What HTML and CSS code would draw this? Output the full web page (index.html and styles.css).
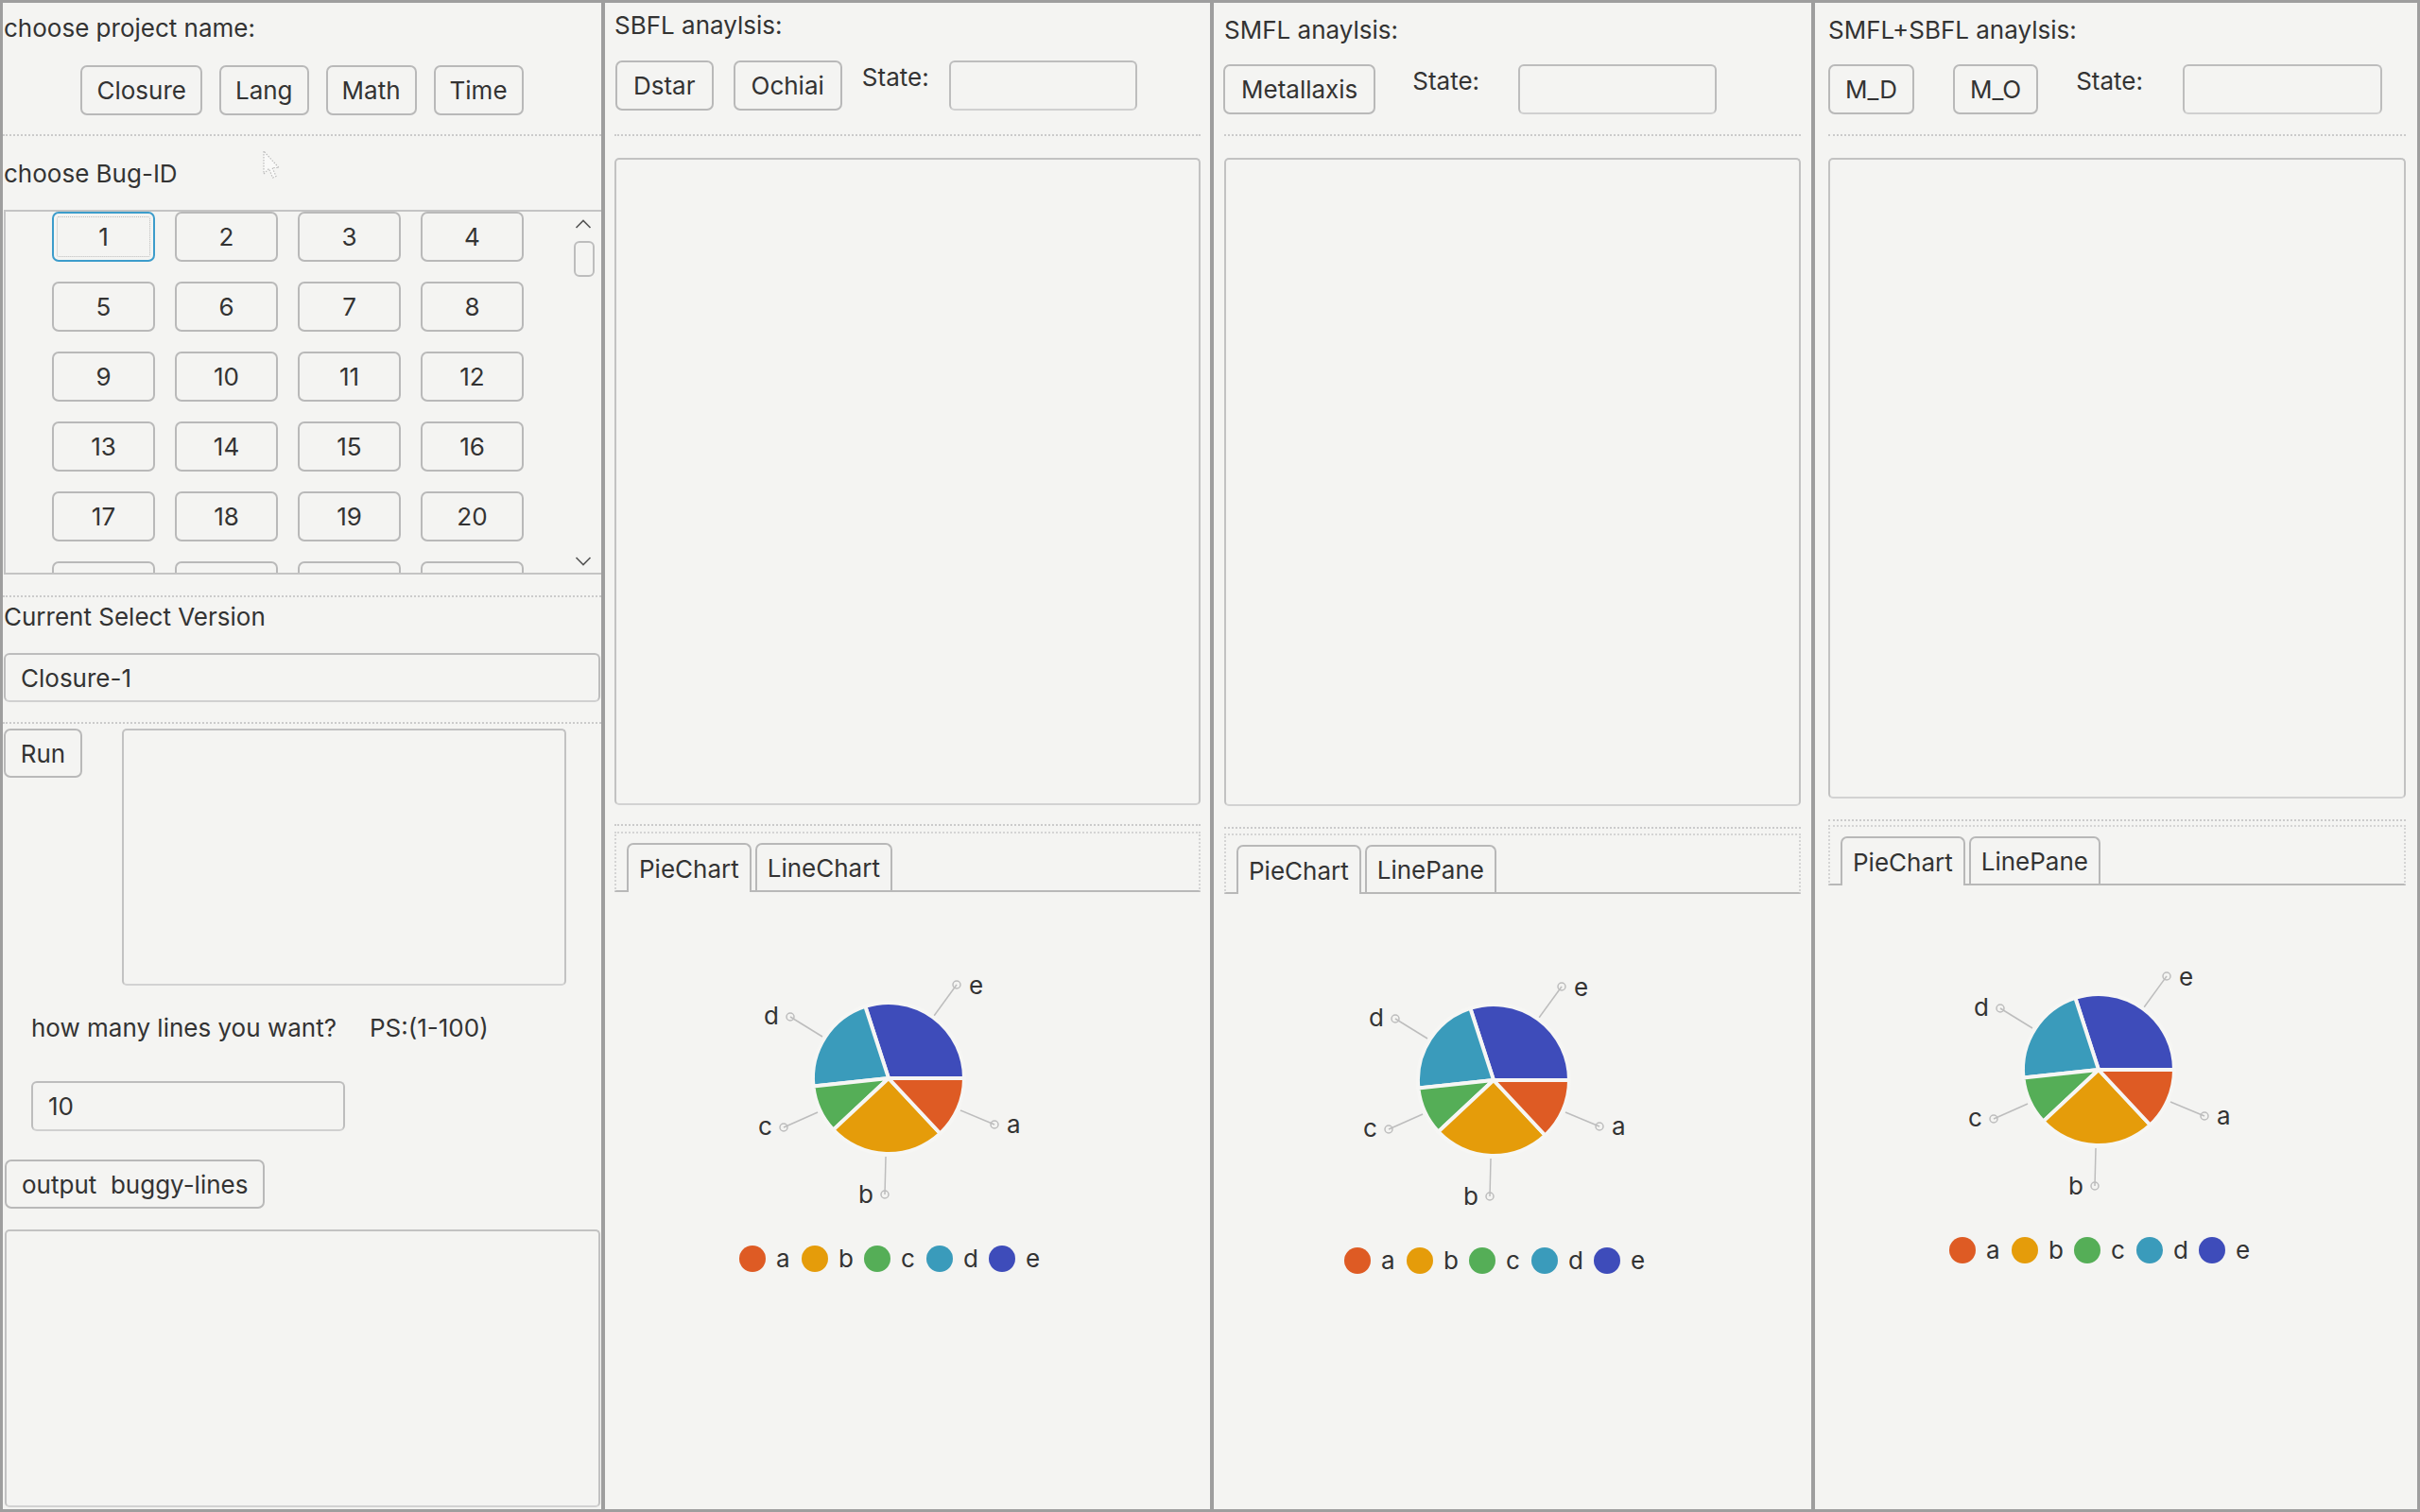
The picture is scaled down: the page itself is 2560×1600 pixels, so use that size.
FILE: index.html
```html
<!DOCTYPE html>
<html lang="en">
<head>
<meta charset="utf-8">
<title>Fault Localization</title>
<link rel="stylesheet" href="styles.css">
</head>
<body>
<div class="window">

  <section class="col col-project">
    <div class="label title-project">choose project name:</div>
    <div class="proj-row">
      <div class="btn">Closure</div>
      <div class="btn">Lang</div>
      <div class="btn">Math</div>
      <div class="btn">Time</div>
    </div>
    <div class="sep sep-a"></div>
    <div class="label bug-label">choose Bug-ID</div>
    <svg class="cursor" width="20" height="34" viewBox="0 0 20 34"><path d="M1,1 L1,25 L6.5,19.5 L10.5,29 L14,27.5 L10,18.5 L17,18.5 Z" fill="#fbfbfa" stroke="#a9a9a9" stroke-width="1.2" stroke-dasharray="1.5 1.5"/></svg>
    <div class="scroll-pane">
      <div class="bug-grid">
        <div class="btn bug focused">1</div>
        <div class="btn bug">2</div>
        <div class="btn bug">3</div>
        <div class="btn bug">4</div>
        <div class="btn bug">5</div>
        <div class="btn bug">6</div>
        <div class="btn bug">7</div>
        <div class="btn bug">8</div>
        <div class="btn bug">9</div>
        <div class="btn bug">10</div>
        <div class="btn bug">11</div>
        <div class="btn bug">12</div>
        <div class="btn bug">13</div>
        <div class="btn bug">14</div>
        <div class="btn bug">15</div>
        <div class="btn bug">16</div>
        <div class="btn bug">17</div>
        <div class="btn bug">18</div>
        <div class="btn bug">19</div>
        <div class="btn bug">20</div>
        <div class="btn bug" aria-hidden="true"></div>
        <div class="btn bug" aria-hidden="true"></div>
        <div class="btn bug" aria-hidden="true"></div>
        <div class="btn bug" aria-hidden="true"></div>
      </div>
      <div class="vscroll">
        <svg class="arrow arrow-up" width="18" height="10" viewBox="0 0 18 10"><polyline points="1.5,9 9,1.5 16.5,9" fill="none" stroke="#555" stroke-width="1.6"/></svg>
        <div class="thumb"></div>
        <svg class="arrow arrow-down" width="18" height="10" viewBox="0 0 18 10"><polyline points="1.5,1 9,8.5 16.5,1" fill="none" stroke="#555" stroke-width="1.6"/></svg>
      </div>
    </div>
    <div class="sep sep-b"></div>
    <div class="label ver-label">Current Select Version</div>
    <div class="field version-field">Closure-1</div>
    <div class="sep sep-c"></div>
    <div class="run-row">
      <div class="btn run-btn">Run</div>
      <div class="area run-area"></div>
    </div>
    <div class="label lines-row"><span class="lines-q">how many lines you want?</span><span>PS:(1-100)</span></div>
    <div class="field lines-field">10</div>
    <div class="btn out-btn">output&nbsp; buggy-lines</div>
    <div class="area out-area"></div>
  </section>

  <section class="col col-sbfl">
    <div class="label a-title">SBFL anaylsis:</div>
    <div class="tool-row">
      <div class="btn tool-first">Dstar</div>
      <div class="btn">Ochiai</div>
      <div class="label state">State:</div>
      <div class="field state-field"></div>
    </div>
    <div class="sep sep-d"></div>
    <div class="area main-area"></div>
    <div class="sep sep-e"></div>
    <div class="tab-box">
      <div class="tab active">PieChart</div>
      <div class="tab">LineChart</div>
    </div>
    <svg class="pie" width="440" height="392" viewBox="0 0 440 392">
      <g class="leaders">
        <line x1="272" y1="78" x2="248" y2="111"/><circle cx="272" cy="78" r="4"/>
        <line x1="96" y1="112" x2="130" y2="133"/><circle cx="96" cy="112" r="4"/>
        <line x1="89" y1="229" x2="125" y2="213"/><circle cx="89" cy="229" r="4"/>
        <line x1="196" y1="300" x2="197" y2="260"/><circle cx="196" cy="300" r="4"/>
        <line x1="312" y1="226" x2="276" y2="211"/><circle cx="312" cy="226" r="4"/>
      </g>
      <g class="slices">
        <path class="s-e" d="M200,177 L280,177 A80,80 0 0 0 175.3,100.9 Z"/>
        <path class="s-d" d="M200,177 L175.3,100.9 A80,80 0 0 0 120.4,185.4 Z"/>
        <path class="s-c" d="M200,177 L120.4,185.4 A80,80 0 0 0 141.5,231.6 Z"/>
        <path class="s-b" d="M200,177 L141.5,231.6 A80,80 0 0 0 254.6,235.5 Z"/>
        <path class="s-a" d="M200,177 L254.6,235.5 A80,80 0 0 0 280,177 Z"/>
      </g>
      <g class="plabels">
        <text x="285" y="88">e</text>
        <text x="68" y="120">d</text>
        <text x="62" y="237">c</text>
        <text x="168" y="309">b</text>
        <text x="325" y="235">a</text>
      </g>
      <g class="legend">
        <circle class="s-a" cx="56" cy="368" r="14"/><text x="81" y="377">a</text>
        <circle class="s-b" cx="122" cy="368" r="14"/><text x="147" y="377">b</text>
        <circle class="s-c" cx="188" cy="368" r="14"/><text x="213" y="377">c</text>
        <circle class="s-d" cx="254" cy="368" r="14"/><text x="279" y="377">d</text>
        <circle class="s-e" cx="320" cy="368" r="14"/><text x="345" y="377">e</text>
      </g>
    </svg>
  </section>

  <section class="col col-smfl">
    <div class="label a-title">SMFL anaylsis:</div>
    <div class="tool-row">
      <div class="btn tool-first">Metallaxis</div>
      <div class="label state">State:</div>
      <div class="field state-field"></div>
    </div>
    <div class="sep sep-d"></div>
    <div class="area main-area"></div>
    <div class="sep sep-e"></div>
    <div class="tab-box">
      <div class="tab active">PieChart</div>
      <div class="tab">LinePane</div>
    </div>
    <svg class="pie" width="440" height="392" viewBox="0 0 440 392">
      <g class="leaders">
        <line x1="272" y1="78" x2="248" y2="111"/><circle cx="272" cy="78" r="4"/>
        <line x1="96" y1="112" x2="130" y2="133"/><circle cx="96" cy="112" r="4"/>
        <line x1="89" y1="229" x2="125" y2="213"/><circle cx="89" cy="229" r="4"/>
        <line x1="196" y1="300" x2="197" y2="260"/><circle cx="196" cy="300" r="4"/>
        <line x1="312" y1="226" x2="276" y2="211"/><circle cx="312" cy="226" r="4"/>
      </g>
      <g class="slices">
        <path class="s-e" d="M200,177 L280,177 A80,80 0 0 0 175.3,100.9 Z"/>
        <path class="s-d" d="M200,177 L175.3,100.9 A80,80 0 0 0 120.4,185.4 Z"/>
        <path class="s-c" d="M200,177 L120.4,185.4 A80,80 0 0 0 141.5,231.6 Z"/>
        <path class="s-b" d="M200,177 L141.5,231.6 A80,80 0 0 0 254.6,235.5 Z"/>
        <path class="s-a" d="M200,177 L254.6,235.5 A80,80 0 0 0 280,177 Z"/>
      </g>
      <g class="plabels">
        <text x="285" y="88">e</text>
        <text x="68" y="120">d</text>
        <text x="62" y="237">c</text>
        <text x="168" y="309">b</text>
        <text x="325" y="235">a</text>
      </g>
      <g class="legend">
        <circle class="s-a" cx="56" cy="368" r="14"/><text x="81" y="377">a</text>
        <circle class="s-b" cx="122" cy="368" r="14"/><text x="147" y="377">b</text>
        <circle class="s-c" cx="188" cy="368" r="14"/><text x="213" y="377">c</text>
        <circle class="s-d" cx="254" cy="368" r="14"/><text x="279" y="377">d</text>
        <circle class="s-e" cx="320" cy="368" r="14"/><text x="345" y="377">e</text>
      </g>
    </svg>
  </section>

  <section class="col col-mix">
    <div class="label a-title">SMFL+SBFL anaylsis:</div>
    <div class="tool-row">
      <div class="btn tool-first">M_D</div>
      <div class="btn">M_O</div>
      <div class="label state">State:</div>
      <div class="field state-field"></div>
    </div>
    <div class="sep sep-d"></div>
    <div class="area main-area"></div>
    <div class="sep sep-e"></div>
    <div class="tab-box">
      <div class="tab active">PieChart</div>
      <div class="tab">LinePane</div>
    </div>
    <svg class="pie" width="440" height="392" viewBox="0 0 440 392">
      <g class="leaders">
        <line x1="272" y1="78" x2="248" y2="111"/><circle cx="272" cy="78" r="4"/>
        <line x1="96" y1="112" x2="130" y2="133"/><circle cx="96" cy="112" r="4"/>
        <line x1="89" y1="229" x2="125" y2="213"/><circle cx="89" cy="229" r="4"/>
        <line x1="196" y1="300" x2="197" y2="260"/><circle cx="196" cy="300" r="4"/>
        <line x1="312" y1="226" x2="276" y2="211"/><circle cx="312" cy="226" r="4"/>
      </g>
      <g class="slices">
        <path class="s-e" d="M200,177 L280,177 A80,80 0 0 0 175.3,100.9 Z"/>
        <path class="s-d" d="M200,177 L175.3,100.9 A80,80 0 0 0 120.4,185.4 Z"/>
        <path class="s-c" d="M200,177 L120.4,185.4 A80,80 0 0 0 141.5,231.6 Z"/>
        <path class="s-b" d="M200,177 L141.5,231.6 A80,80 0 0 0 254.6,235.5 Z"/>
        <path class="s-a" d="M200,177 L254.6,235.5 A80,80 0 0 0 280,177 Z"/>
      </g>
      <g class="plabels">
        <text x="285" y="88">e</text>
        <text x="68" y="120">d</text>
        <text x="62" y="237">c</text>
        <text x="168" y="309">b</text>
        <text x="325" y="235">a</text>
      </g>
      <g class="legend">
        <circle class="s-a" cx="56" cy="368" r="14"/><text x="81" y="377">a</text>
        <circle class="s-b" cx="122" cy="368" r="14"/><text x="147" y="377">b</text>
        <circle class="s-c" cx="188" cy="368" r="14"/><text x="213" y="377">c</text>
        <circle class="s-d" cx="254" cy="368" r="14"/><text x="279" y="377">d</text>
        <circle class="s-e" cx="320" cy="368" r="14"/><text x="345" y="377">e</text>
      </g>
    </svg>
  </section>

</div>
</body>
</html>
```

FILE: styles.css
```css
* { box-sizing: border-box; margin: 0; padding: 0; }

html, body {
  width: 2560px;
  height: 1600px;
  overflow: hidden;
}

body {
  background: #f4f4f2;
  font-family: Inter, "Noto Sans", sans-serif;
  font-size: 26px;
  color: #333;
}

.window {
  display: flex;
  width: 2560px;
  height: 1600px;
  border: 3px solid #9e9e9e;
}

.col {
  display: flex;
  flex-direction: column;
  height: 100%;
}
.col + .col { border-left: 4px solid #9e9e9e; }

.col-project { width: 633px; position: relative; }
.col-sbfl { width: 644px; padding: 0 10px; }
.col-smfl { width: 636px; padding: 0 11px; }
.col-mix { width: 641px; padding: 0 12px 0 14px; }

.label {
  line-height: 30px;
  white-space: nowrap;
}

.btn {
  height: 53px;
  border: 2px solid #b9b9b9;
  border-radius: 7px;
  display: flex;
  align-items: center;
  justify-content: center;
  padding: 0 15px;
  white-space: nowrap;
  flex: none;
}

.field {
  height: 53px;
  border: 2px solid #bdbdbd;
  border-bottom-color: #d0d0d0;
  border-radius: 6px;
  display: flex;
  align-items: center;
  padding-left: 16px;
}

.area {
  border: 2px solid #c2c2c2;
  border-bottom-color: #d2d2d2;
  border-radius: 5px;
}

.sep {
  height: 0;
  border-top: 2px dotted #cbcbcb;
}

/* ---------- column 1 ---------- */
.title-project { margin-top: 12px; padding-left: 1px; }

.proj-row {
  display: flex;
  justify-content: center;
  gap: 18px;
  margin-top: 24px;
}
.proj-row .btn { padding: 0 15px; }

.sep-a { margin-top: 20px; }
.bug-label { margin-top: 25px; padding-left: 1px; }

/* mouse pointer captured in the screenshot, floating over the panel */
.cursor {
  position: absolute;
  left: 275px;
  top: 156px;
  opacity: 0.75;
}

.scroll-pane {
  margin-top: 23px;
  margin-left: 1px;
  height: 386px;
  border: 2px solid #c4c4c4;
  border-right: none;
  display: flex;
  overflow: hidden;
}

.bug-grid {
  flex: 1;
  display: grid;
  grid-template-columns: repeat(4, 109px);
  grid-auto-rows: 53px;
  column-gap: 21px;
  row-gap: 21px;
  padding-left: 49px;
  align-content: start;
  overflow: hidden;
}

.bug { padding: 0; }
.bug.focused {
  border-color: #3c9ccb;
  outline: 1px dotted #bcbcbc;
  outline-offset: -6px;
}

.vscroll {
  width: 32px;
  display: flex;
  flex-direction: column;
  align-items: flex-start;
  padding-left: 3px;
}
.arrow-up { margin-top: 8px; margin-left: 1px; }
.thumb {
  margin-top: 13px;
  width: 22px;
  height: 38px;
  border: 2px solid #bdbdbd;
  border-radius: 6px;
}
.arrow-down { margin-top: auto; margin-bottom: 7px; margin-left: 1px; }

.sep-b { margin-top: 22px; }
.ver-label { margin-top: 6px; padding-left: 1px; }

.version-field { margin: 23px 1px 0 1px; height: 52px; }

.sep-c { margin-top: 21px; }

.run-row {
  display: flex;
  align-items: flex-start;
  margin-top: 5px;
}
.run-btn { margin-left: 1px; width: 83px; height: 52px; padding: 0; }
.run-area { margin-left: 42px; width: 470px; height: 272px; }

.lines-row {
  margin-top: 30px;
  padding-left: 30px;
  display: flex;
}
.lines-q { width: 358px; }

.lines-field { margin: 41px 0 0 30px; width: 332px; }

.out-btn {
  margin: 30px 0 0 2px;
  align-self: flex-start;
  height: 52px;
  padding: 0 16px;
}

.out-area {
  margin: 22px 1px 2px 2px;
  flex: 1;
}

/* ---------- analysis columns ---------- */
.a-title { margin-top: 9px; }
.col-smfl .a-title, .col-mix .a-title { margin-top: 14px; }

.tool-row {
  display: flex;
  align-items: flex-start;
  gap: 21px;
  margin-top: 22px;
}
.col-smfl .tool-row, .col-mix .tool-row { margin-top: 21px; gap: 41px; }

.tool-first { margin-left: 1px; }
.col-smfl .tool-first { margin-left: -1px; }
.col-mix .tool-first { margin-left: 0; }

.col-sbfl .btn { padding: 0 17px; }
.col-smfl .btn { padding: 0 17px; }
.col-mix .btn { padding: 0 16px; }

.state { margin-top: 3px; }
.state-field { width: 199px; margin-left: 0; }
.col-smfl .state { margin-left: -2px; }
.col-smfl .state-field { width: 210px; }
.col-mix .state { margin-left: -1px; }
.col-mix .state-field { width: 211px; margin-left: 1px; }

.sep-d { margin-top: 25px; }
.col-smfl .sep-d, .col-mix .sep-d { margin-top: 21px; }

.main-area { margin-top: 23px; height: 685px; flex: none; }
.col-smfl .main-area { height: 686px; }
.col-mix .main-area { height: 678px; }

.sep-e { margin-top: 20px; }
.col-smfl .sep-e, .col-mix .sep-e { margin-top: 22px; }

.tab-box {
  margin-top: 6px;
  height: 64px;
  flex: none;
  border: 2px dotted #d4d4d4;
  border-bottom: 2px solid #b8b8b8;
  display: flex;
  align-items: flex-end;
  padding-left: 11px;
  gap: 4px;
}
.col-smfl .tab-box { margin-top: 5px; }
.col-mix .tab-box { margin-top: 4px; }

.tab {
  height: 50px;
  border: 2px solid #b8b8b8;
  border-bottom: none;
  border-radius: 7px 7px 0 0;
  padding: 0 11px;
  display: flex;
  align-items: center;
  white-space: nowrap;
}
.tab.active {
  height: 52px;
  margin-bottom: -2px;
  background: #f4f4f2;
}

.pie {
  align-self: center;
  margin-top: 20px;
  flex: none;
  font-family: Inter, "Noto Sans", sans-serif;
  font-size: 26px;
}
.col-mix .pie { margin-top: 18px; }

.pie text { fill: #333; }

.leaders line { stroke: #bdbdbd; stroke-width: 1.5; }
.leaders circle { fill: none; stroke: #bdbdbd; stroke-width: 1.5; }

.slices path {
  stroke: #f6f6f4;
  stroke-width: 4;
  stroke-linejoin: round;
}

.s-a { fill: #de5b24; }
.s-b { fill: #e59c0a; }
.s-c { fill: #55ae57; }
.s-d { fill: #3a9bbb; }
.s-e { fill: #3e4cba; }
```
